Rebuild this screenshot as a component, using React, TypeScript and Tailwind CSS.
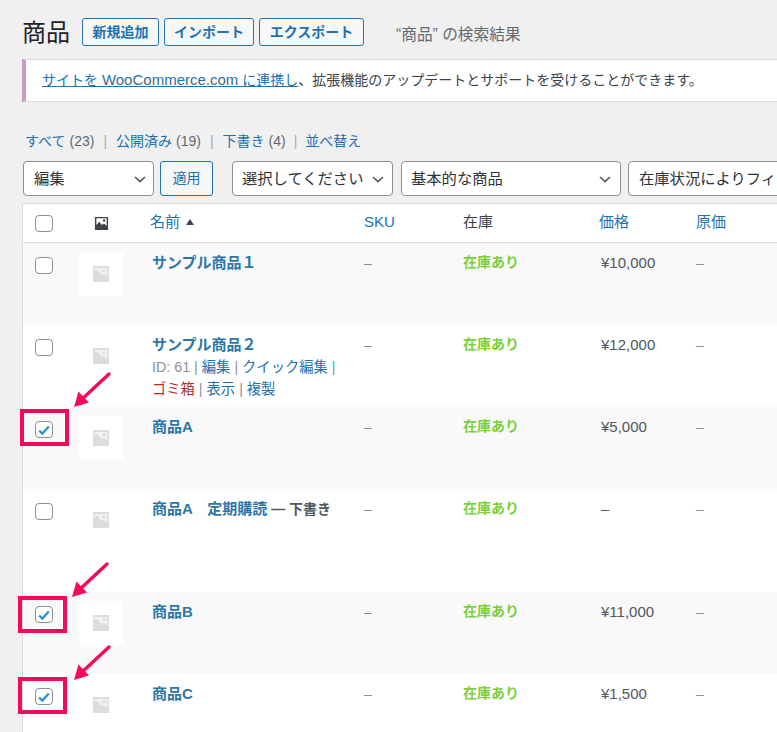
import type { ReactNode } from "react";

const font = { fontFamily: '"Liberation Sans", "Noto Sans CJK JP", sans-serif' };

type Product = {
  name: string;
  suffix?: string;
  price: string;
  height: string;
  checked?: boolean;
  alt?: boolean;
  actions?: boolean;
};

const products: Product[] = [
  { name: "サンプル商品１", price: "¥10,000", height: "h-[82px]", alt: true },
  { name: "サンプル商品２", price: "¥12,000", height: "h-[82px]", actions: true },
  { name: "商品A", price: "¥5,000", height: "h-[82px]", alt: true, checked: true },
  { name: "商品A　定期購読", suffix: " — 下書き", price: "–", height: "h-[103px]" },
  { name: "商品B", price: "¥11,000", height: "h-[82px]", alt: true, checked: true },
  { name: "商品C", price: "¥1,500", height: "h-[82px]", checked: true },
];

function Chevron() {
  return (
    <svg viewBox="0 0 16 16" className="h-4 w-4 shrink-0 text-[#50575e]" fill="none" stroke="currentColor" strokeWidth="1.6">
      <path d="M3 6l5 4.6L13 6" />
    </svg>
  );
}

function Select({ children, className }: { children: ReactNode; className: string }) {
  return (
    <div className={`flex h-[35px] shrink-0 items-center justify-between rounded-[4px] border border-[#8c8f94] bg-white text-[15.300px] text-[#2c3338] ${className}`}>
      <span className="whitespace-nowrap pt-[1px]">{children}</span>
      <Chevron />
    </div>
  );
}

function OutlineButton({ children, className }: { children: ReactNode; className: string }) {
  return (
    <div className={`flex shrink-0 items-center justify-center rounded-[3px] border border-[#2271b1] bg-[#f6f7f7] text-[#2271b1] ${className}`}>
      {children}
    </div>
  );
}

function Checkbox({ checked }: { checked?: boolean }) {
  return (
    <div className="flex h-[17px] w-[18px] items-center justify-center rounded-[4px] border border-[#8c8f94] bg-white">
      {checked && (
        <svg viewBox="0 0 16 16" className="h-[14px] w-[14px] text-[#2f8fc9]" fill="none" stroke="currentColor" strokeWidth="2.6">
          <path d="M2.5 8.5l3.6 3.6L13.5 4" />
        </svg>
      )}
    </div>
  );
}

function Placeholder() {
  return (
    <svg viewBox="0 0 16 16" className="h-4 w-4 text-[#dcdcde]">
      <rect width="16" height="16" fill="#f1f1f1" />
      <path fill="currentColor" fillRule="evenodd" d="M0 0h16v16H0zM11 3.2a1.5 1.5 0 1 0 0 3 1.5 1.5 0 0 0 0-3zM1.5 9.5V5l3-1 4 5 2-1 4 2.500V2H1.500z" />
    </svg>
  );
}

function Row({ p }: { p: Product }) {
  return (
    <div className={`flex ${p.height} ${p.alt ? "bg-[#f9f9f9]" : "bg-white"}`}>
      <div className="w-[56px] shrink-0 pl-[12px] pt-[14px]">
        <Checkbox checked={p.checked} />
      </div>
      <div className="mt-[9px] flex h-[44px] w-[44px] shrink-0 items-center justify-center bg-white">
        <Placeholder />
      </div>
      <div className="w-[241px] shrink-0 pl-[29px] pt-[9px] leading-[22px]">
        <div className="whitespace-nowrap text-[15px] font-bold text-[#2b77a8]">
          {p.name}
          {p.suffix && <span className="text-[14px] text-[#50575e]">{p.suffix}</span>}
        </div>
        {p.actions && (
          <div className="text-[14.300px] text-[#8c8f94]">
            ID: 61 | <span className="text-[#2271b1]">編集</span> | <span className="text-[#2271b1]">クイック編集</span> |
            <br />
            <span className="text-[#b32d2e]">ゴミ箱</span> | <span className="text-[#2271b1]">表示</span> | <span className="text-[#2271b1]">複製</span>
          </div>
        )}
      </div>
      <div className="w-[99px] shrink-0 pt-[9px] text-[14px] leading-[22px] text-[#8c8f94]">–</div>
      <div className="w-[136px] shrink-0 pt-[8px] text-[14px] font-bold leading-[22px] text-[#7ad03a]">在庫あり</div>
      <div className="w-[97px] shrink-0 pl-[2px] pt-[9px] text-[15px] leading-[22px] text-[#50575e]">{p.price}</div>
      <div className="shrink-0 pt-[9px] text-[14px] leading-[22px] text-[#8c8f94]">–</div>
    </div>
  );
}

function Marker({ box, arrow }: { box: string; arrow: string }) {
  return (
    <>
      <div className={`absolute h-[37px] w-[49px] border-[4px] border-[#f50a56] ${box}`} />
      <svg viewBox="0 0 40 40" className={`absolute h-[40px] w-[40px] text-[#f50a56] ${arrow}`}>
        <path d="M37 3L8 30" stroke="currentColor" strokeWidth="3.400" strokeLinecap="round" fill="none" />
        <path d="M2 36l4.500-15.500 10.500 11z" fill="currentColor" />
      </svg>
    </>
  );
}

export default function App() {
  return (
    <div className="relative h-[732px] w-[777px] overflow-hidden bg-[#f0f0f1]" style={font}>
      <div className="w-[900px] pl-[22px]">
        {/* Title bar */}
        <div className="flex h-[59px] items-start pt-[18px]">
          <h1 className="w-[60px] text-[24px] leading-[29px] text-[#1d2327]">商品</h1>
          <div className="flex gap-[5px] text-[14px] font-bold">
            <OutlineButton className="h-[28px] w-[77px]">新規追加</OutlineButton>
            <OutlineButton className="h-[28px] w-[90px]">インポート</OutlineButton>
            <OutlineButton className="h-[28px] w-[105px]">エクスポート</OutlineButton>
          </div>
          <div className="ml-[32px] pt-[7px] text-[15.700px] leading-[20px] text-[#646970]">“商品” の検索結果</div>
        </div>

        {/* Notice */}
        <div className="flex h-[43px] items-center border border-l-[4px] border-[#dcdcde] border-l-[#c99ac4] bg-white pl-[16px] text-[14px] text-[#3c434a]">
          <span className="text-[#2271b1] underline">
            サイトを <span className="text-[15px]">WooCommerce.com</span> に連携し
          </span>
          、拡張機能のアップデートとサポートを受けることができます。
        </div>

        {/* Status filters */}
        <div className="flex h-[59px] items-end pb-[10px] pl-[3px] text-[14px] leading-[20px] text-[#646970]">
          <span className="text-[#2271b1]">すべて</span>
          <span className="ml-1">(23)</span>
          <span className="mx-[9px] text-[#a7aaad]">|</span>
          <span className="text-[#2271b1]">公開済み</span>
          <span className="ml-1">(19)</span>
          <span className="mx-[9px] text-[#a7aaad]">|</span>
          <span className="text-[#2271b1]">下書き</span>
          <span className="ml-1">(4)</span>
          <span className="mx-[8px] text-[#a7aaad]">|</span>
          <span className="text-[#2271b1]">並べ替え</span>
        </div>

        {/* Bulk actions and filters */}
        <div className="flex h-[42px] items-start pl-[1px]">
          <Select className="w-[131px] pl-[10px] pr-[5px]">編集</Select>
          <OutlineButton className="ml-[6px] h-[35px] w-[53px] bg-[#f0f0f1] text-[14px]">適用</OutlineButton>
          <Select className="ml-[19px] w-[161px] pl-[9px] pr-[6px]">選択してください</Select>
          <Select className="ml-[8px] w-[220px] pl-[9px] pr-[7px]">基本的な商品</Select>
          <Select className="ml-[7px] w-[200px] pl-[10px]">在庫状況によりフィルター</Select>
        </div>

        {/* Product table */}
        <div className="border-l border-t border-[#dcdcde]">
          <div className="flex h-[39px] items-center border-b border-[#dcdcde] bg-white text-[15px]">
            <div className="w-[56px] shrink-0 pl-[12px] pt-[1px]">
              <Checkbox />
            </div>
            <div className="w-[44px] shrink-0 pl-[15px]">
              <svg viewBox="0 0 16 16" className="h-[15px] w-[15px] text-[#3c434a]">
                <path fill="currentColor" fillRule="evenodd" d="M1 1h14v14H1zM10.800 3.500a1.300 1.300 0 1 0 0 2.600 1.300 1.300 0 0 0 0-2.600zM2.500 9.500l3-3.500 3 3.500 2-1.500 3 2.500V2.500h-11z" />
              </svg>
            </div>
            <div className="flex w-[241px] shrink-0 items-center gap-[6px] pb-[2px] pl-[27px] text-[#2271b1]">
              名前
              <span className="h-0 w-0 border-x-[4px] border-b-[6px] border-x-transparent border-b-[#3c434a]" />
            </div>
            <div className="w-[99px] shrink-0 pb-[2px] text-[#2271b1]">SKU</div>
            <div className="w-[136px] shrink-0 pb-[2px] text-[#3c434a]">在庫</div>
            <div className="w-[97px] shrink-0 pb-[2px] text-[#2271b1]">価格</div>
            <div className="shrink-0 pb-[2px] text-[#2271b1]">原価</div>
          </div>
          {products.map(p => (
            <Row key={p.name} p={p} />
          ))}
        </div>
      </div>

      {/* Red annotations */}
      <Marker box="left-[20px] top-[409px]" arrow="left-[72px] top-[371px]" />
      <Marker box="left-[18px] top-[596px]" arrow="left-[70px] top-[561px]" />
      <Marker box="left-[18px] top-[677px]" arrow="left-[72px] top-[644px]" />
    </div>
  );
}
